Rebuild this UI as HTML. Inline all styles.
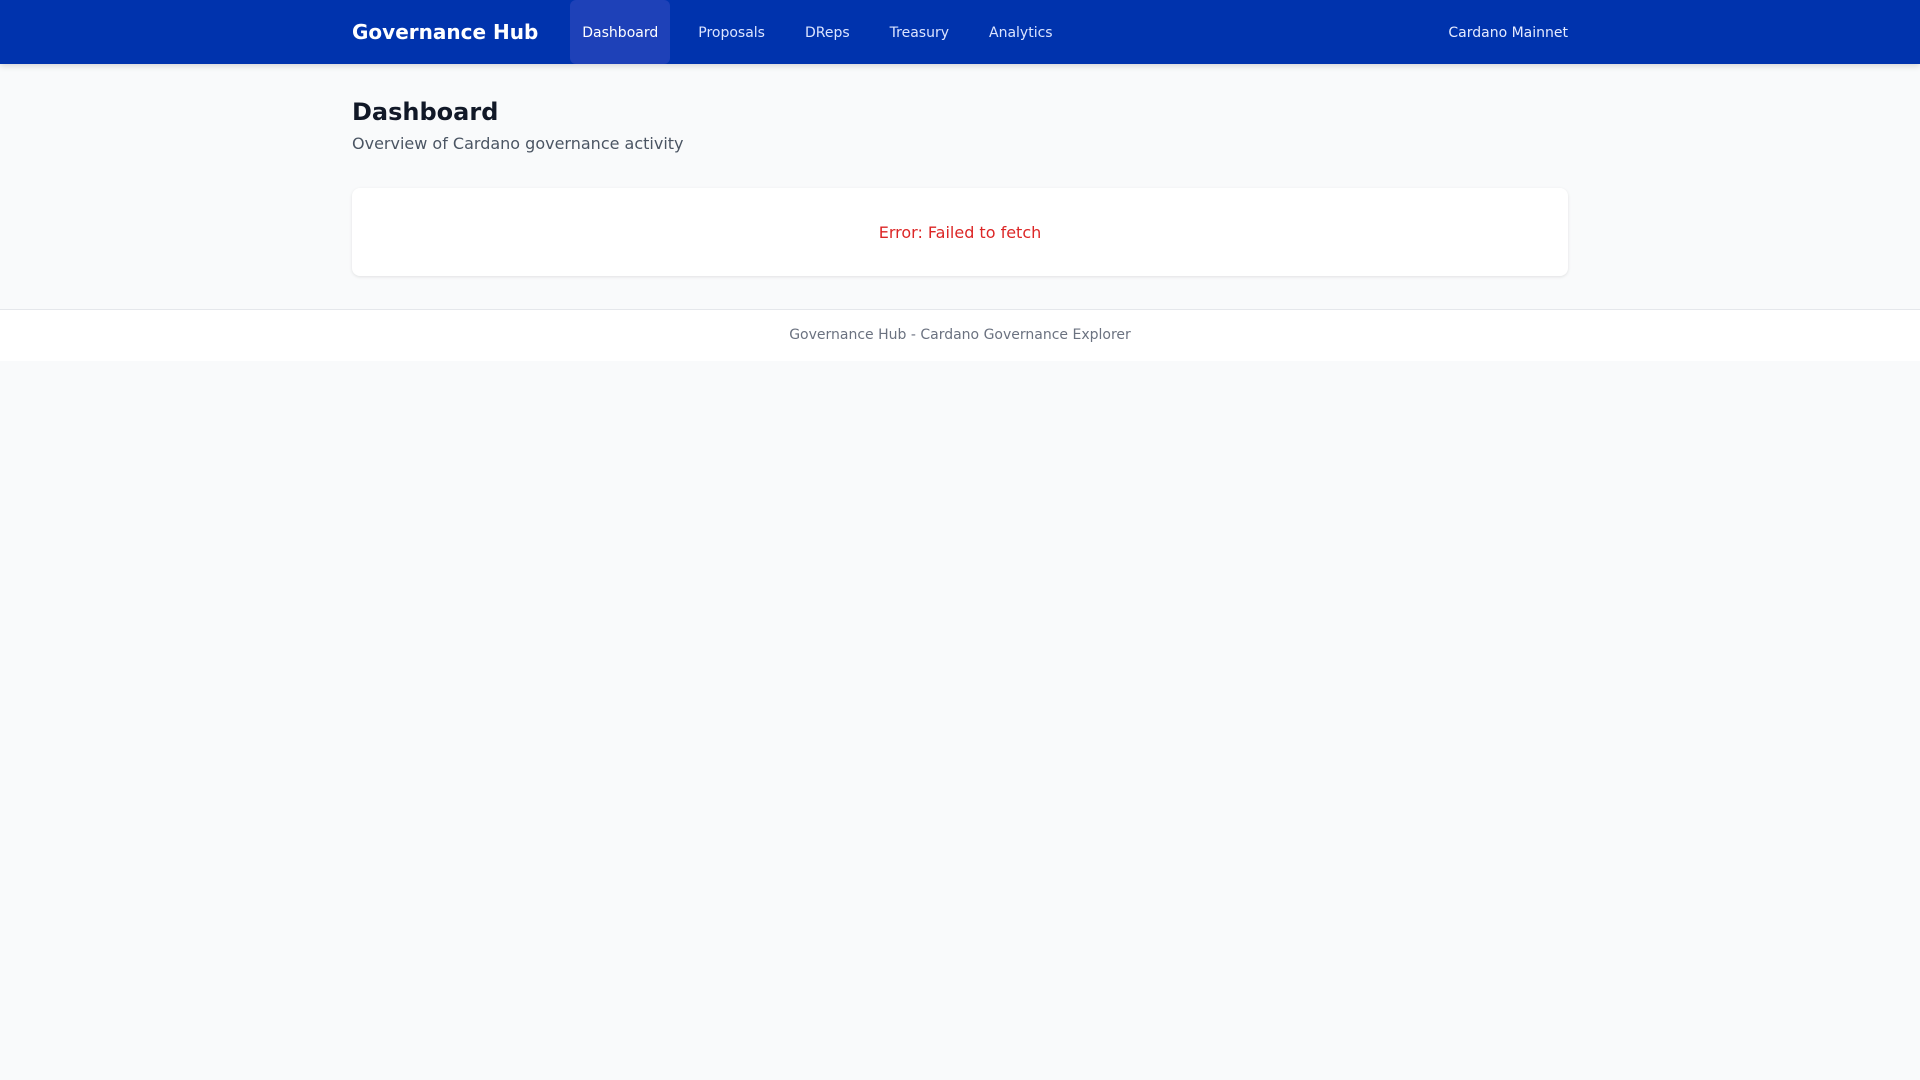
<!DOCTYPE html>
<html><head><meta charset="utf-8"><style>
*{box-sizing:border-box;margin:0;padding:0}
body{width:1920px;height:1080px;background:#f9fafb;font-family:"DejaVu Sans","Liberation Sans",sans-serif;color:#111827}
nav{height:64px;background:#0033ad;box-shadow:0 2px 6px rgba(0,0,0,.15);position:relative}
.wrap{width:1216px;margin:0 auto;position:relative}
nav .wrap{height:64px;display:flex;align-items:center}
.logo{color:#fff;font-weight:bold;font-size:20px;margin-right:32px}
.links{display:flex;height:64px;gap:16px}
.links a{color:#dbe4ff;font-size:14px;padding:2px 12px 0;display:flex;align-items:center;text-decoration:none}
.links a.act{background:#1e41b8;border-radius:6px;color:#fff}
.net{position:absolute;right:0;top:1px;line-height:64px;color:#e5ebff;font-size:14px}
h1{font-size:24px;font-weight:bold;margin-top:32px;line-height:32px}
.sub{color:#4b5563;font-size:16px;margin-top:4px;line-height:24px}
.card{background:#fff;border-radius:8px;box-shadow:0 1px 3px rgba(0,0,0,.1);height:88px;margin-top:32px;display:flex;align-items:center;justify-content:center;color:#dc2626;font-size:16px}
footer{margin-top:33px;border-top:1px solid #e5e7eb;background:#fff;height:52px;text-align:center;line-height:50px;color:#6b7280;font-size:14px}
</style></head><body>
<nav><div class="wrap"><div class="logo">Governance Hub</div>
<div class="links"><a class="act">Dashboard</a><a>Proposals</a><a>DReps</a><a>Treasury</a><a>Analytics</a></div>
<div class="net">Cardano Mainnet</div></div></nav>
<div class="wrap"><h1>Dashboard</h1><div class="sub">Overview of Cardano governance activity</div>
<div class="card">Error: Failed to fetch</div></div>
<footer>Governance Hub - Cardano Governance Explorer</footer>
</body></html>
